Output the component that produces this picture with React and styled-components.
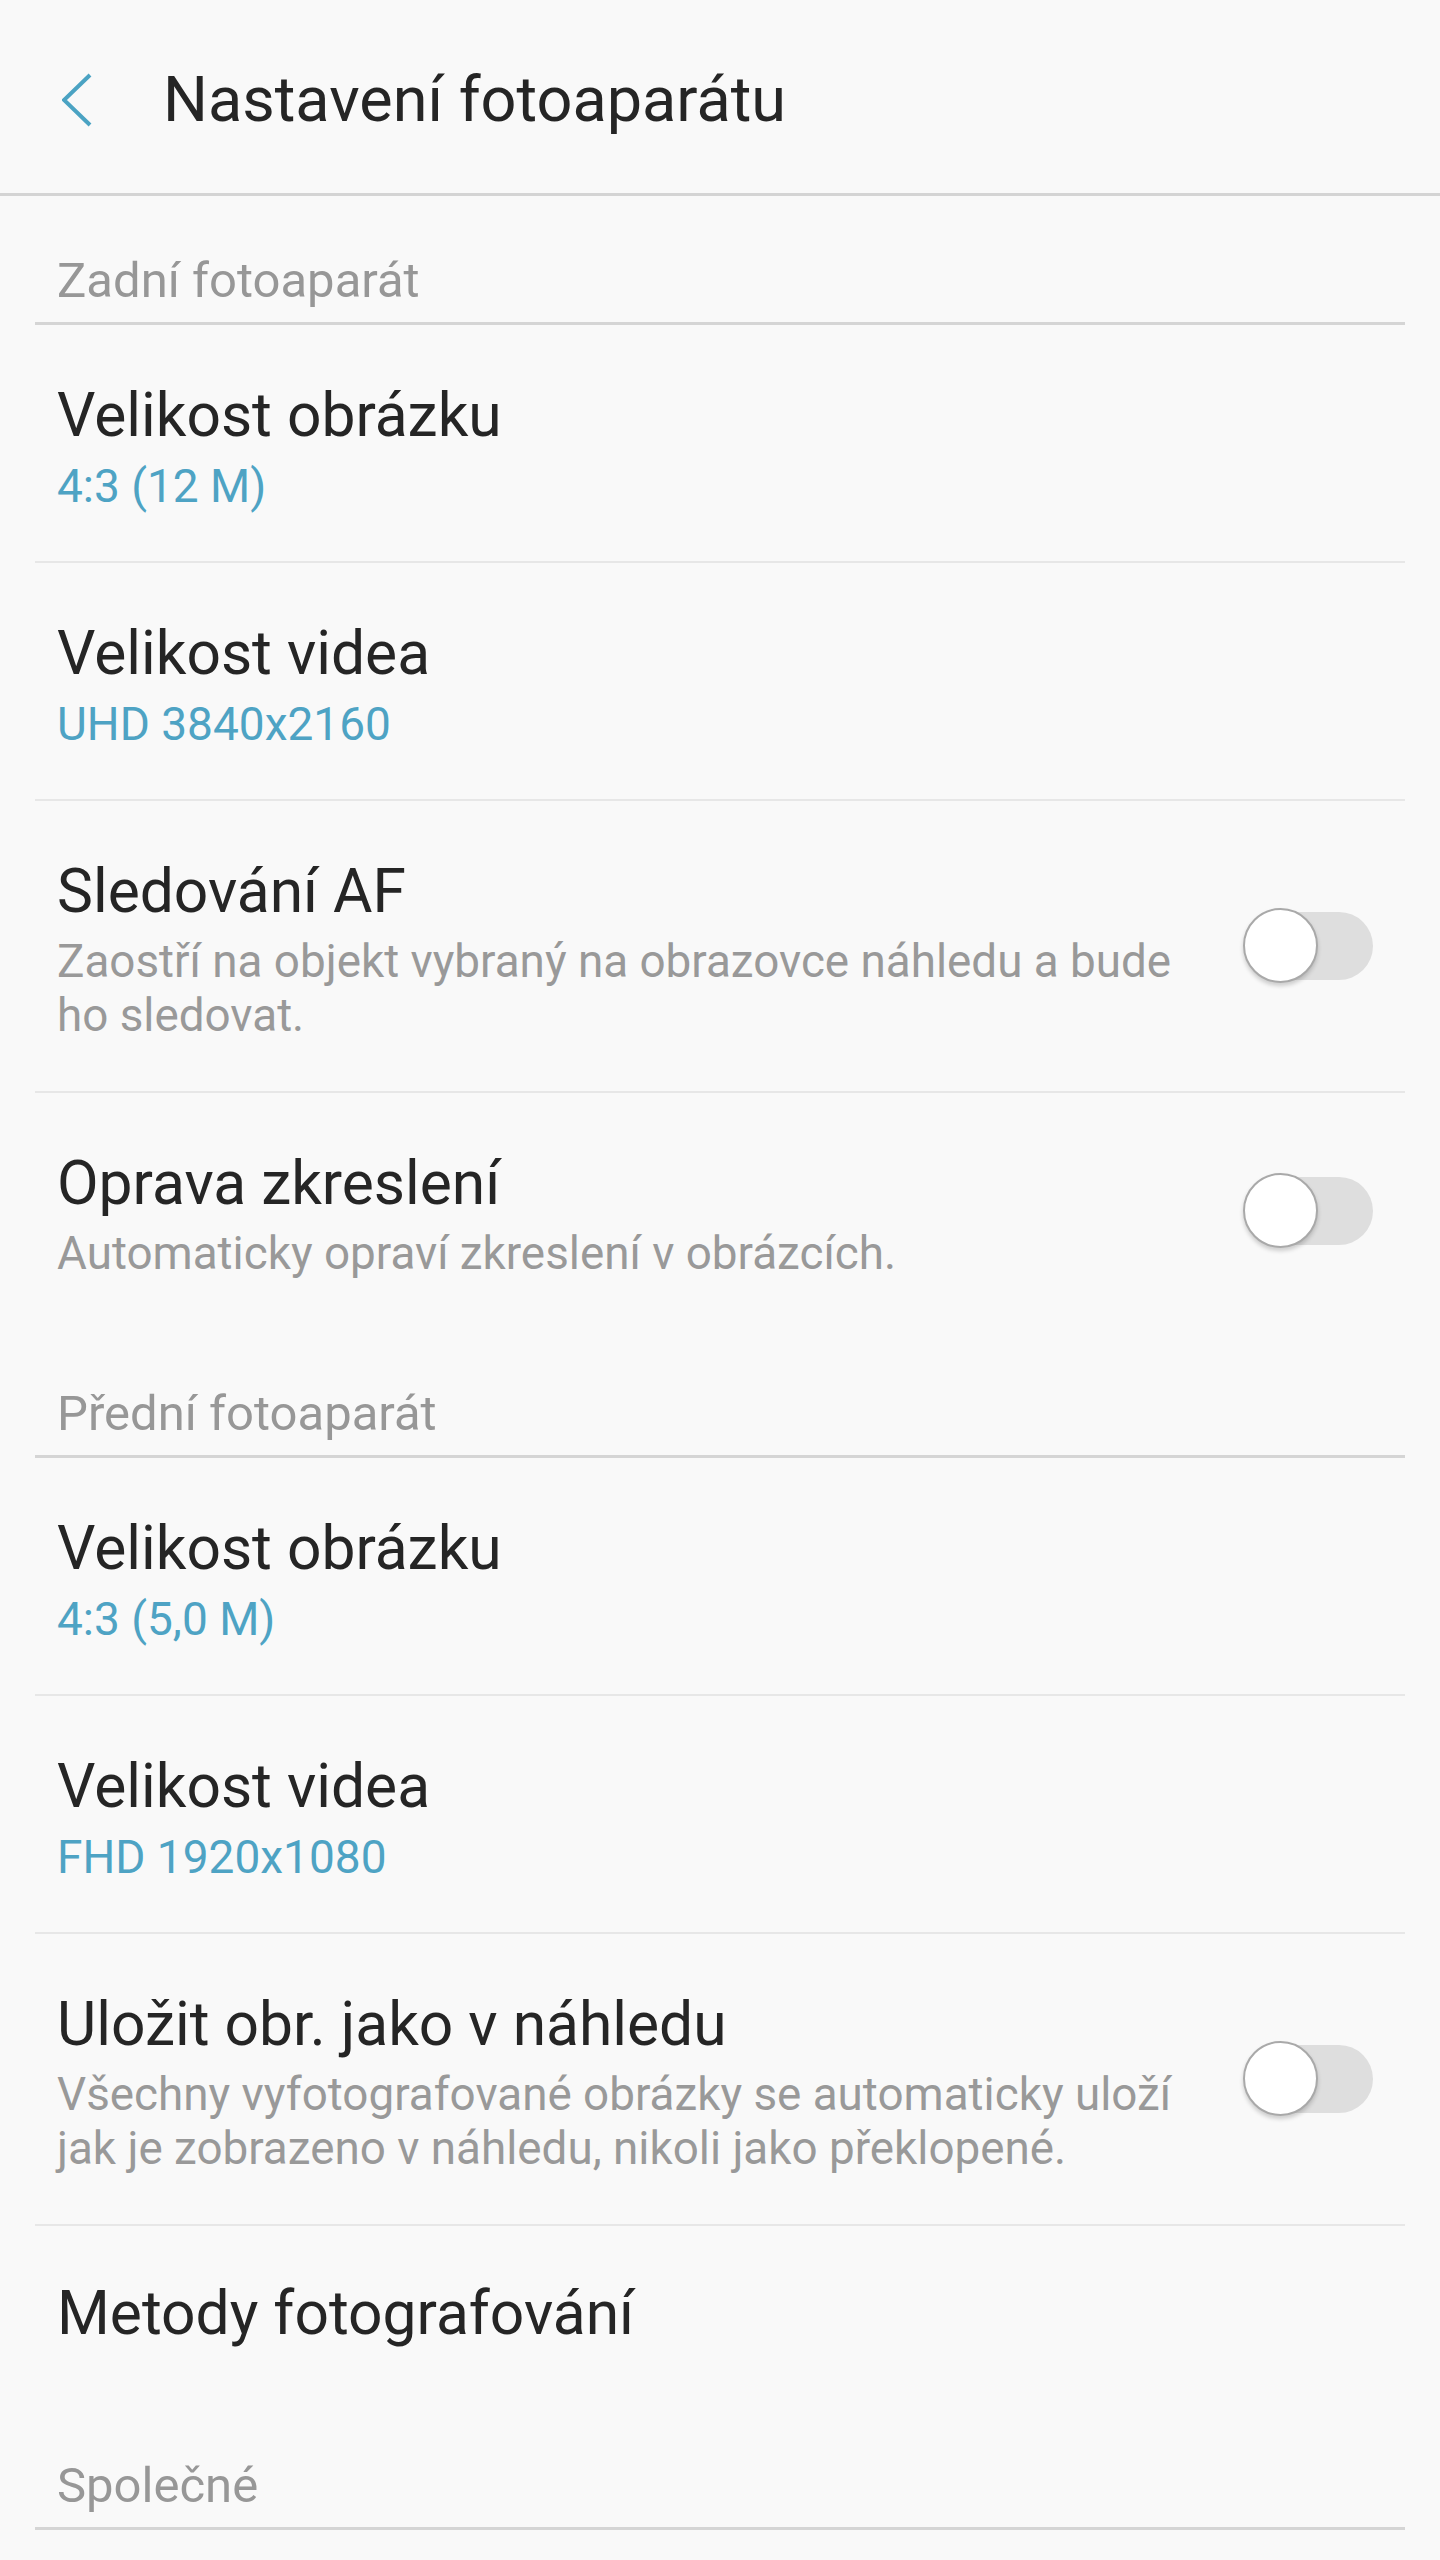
import React from "react";
import styled, { createGlobalStyle } from "styled-components";

const GlobalStyle = createGlobalStyle`
  html, body {
    margin: 0;
    padding: 0;
    background: #f9f9f9;
  }
  body {
    font-family: Roboto, "Noto Sans", sans-serif;
    color: #252525;
  }
`;

const sections = [
  {
    title: "Zadní fotoaparát",
    items: [
      { label: "Velikost obrázku", value: "4:3 (12 M)" },
      { label: "Velikost videa", value: "UHD 3840x2160" },
      {
        label: "Sledování AF",
        desc: "Zaostří na objekt vybraný na obrazovce náhledu a bude ho sledovat.",
        toggle: true,
      },
      {
        label: "Oprava zkreslení",
        desc: "Automaticky opraví zkreslení v obrázcích.",
        toggle: true,
      },
    ],
  },
  {
    title: "Přední fotoaparát",
    items: [
      { label: "Velikost obrázku", value: "4:3 (5,0 M)" },
      { label: "Velikost videa", value: "FHD 1920x1080" },
      {
        label: "Uložit obr. jako v náhledu",
        desc: "Všechny vyfotografované obrázky se automaticky uloží jak je zobrazeno v náhledu, nikoli jako překlopené.",
        toggle: true,
      },
      { label: "Metody fotografování", single: true },
    ],
  },
  {
    title: "Společné",
    items: [],
  },
];

function BackIcon() {
  return (
    <svg width="34" height="56" viewBox="0 0 34 56">
      <polyline
        points="28,3 2,28 28,53"
        fill="none"
        stroke="#4ba3c3"
        strokeWidth="4"
      />
    </svg>
  );
}

function Toggle() {
  return (
    <StToggle>
      <StTrack />
      <StThumb />
    </StToggle>
  );
}

export default function App() {
  return (
    <>
      <GlobalStyle />
      <StPage>
        <StHeader>
          <StBack>
            <BackIcon />
          </StBack>
          <StTitle>Nastavení fotoaparátu</StTitle>
        </StHeader>

        <StList>
          {sections.map((section) => (
            <React.Fragment key={section.title}>
              <StSectionHeader>{section.title}</StSectionHeader>
              {section.items.map((item, i) => (
                <StRow
                  key={item.label}
                  $last={i === section.items.length - 1}
                  $single={item.single}
                >
                  <StText>
                    <StLabel>{item.label}</StLabel>
                    {item.value && <StValue>{item.value}</StValue>}
                    {item.desc && <StDesc>{item.desc}</StDesc>}
                  </StText>
                  {item.toggle && <Toggle />}
                </StRow>
              ))}
            </React.Fragment>
          ))}
        </StList>
      </StPage>
    </>
  );
}

const StPage = styled.div`
  width: 1440px;
  min-height: 2560px;
  background: #f9f9f9;
`;

const StHeader = styled.header`
  box-sizing: border-box;
  height: 196px;
  padding-top: 6px;
  display: flex;
  align-items: center;
  border-bottom: 3px solid #d4d4d4;
`;

const StBack = styled.div`
  display: flex;
  margin-left: 62px;
`;

const StTitle = styled.h1`
  margin: 0 0 0 67px;
  font-size: 63px;
  line-height: 76px;
  font-weight: 400;
  color: #252525;
`;

const StList = styled.div`
  margin: 0 35px;
`;

const StSectionHeader = styled.div`
  padding: 57px 22px 13px;
  font-size: 49px;
  line-height: 56px;
  color: #979797;
  border-bottom: 3px solid #d5d5d5;
`;

const StRow = styled.div`
  display: flex;
  align-items: center;
  padding: ${(p) => (p.$single ? "52px 32px 51px 22px" : "55px 32px 48px 22px")};
  border-bottom: ${(p) => (p.$last ? "none" : "2px solid #e7e7e7")};
`;

const StText = styled.div`
  flex: 1;
  min-width: 0;
  display: flex;
  flex-direction: column;
`;

const StLabel = styled.div`
  font-size: 60.5px;
  line-height: 72px;
  color: #252525;
`;

const StValue = styled.div`
  margin-top: 7px;
  font-size: 46px;
  line-height: 54px;
  color: #4ea3c4;
`;

const StDesc = styled.div`
  margin-top: 7px;
  font-size: 45.8px;
  line-height: 54px;
  color: #999999;
`;

const StToggle = styled.div`
  position: relative;
  flex: none;
  width: 130px;
  height: 75px;
  margin: 0 0 8px 36px;
`;

const StTrack = styled.div`
  position: absolute;
  left: 8px;
  right: 0;
  top: 4px;
  height: 68px;
  border-radius: 34px;
  background: #dedede;
`;

const StThumb = styled.div`
  position: absolute;
  left: 0;
  top: 0;
  box-sizing: border-box;
  width: 75px;
  height: 75px;
  border-radius: 50%;
  background: #ffffff;
  border: 2px solid #a9a9a9;
  box-shadow: 0 3px 4px rgba(0, 0, 0, 0.18);
`;
